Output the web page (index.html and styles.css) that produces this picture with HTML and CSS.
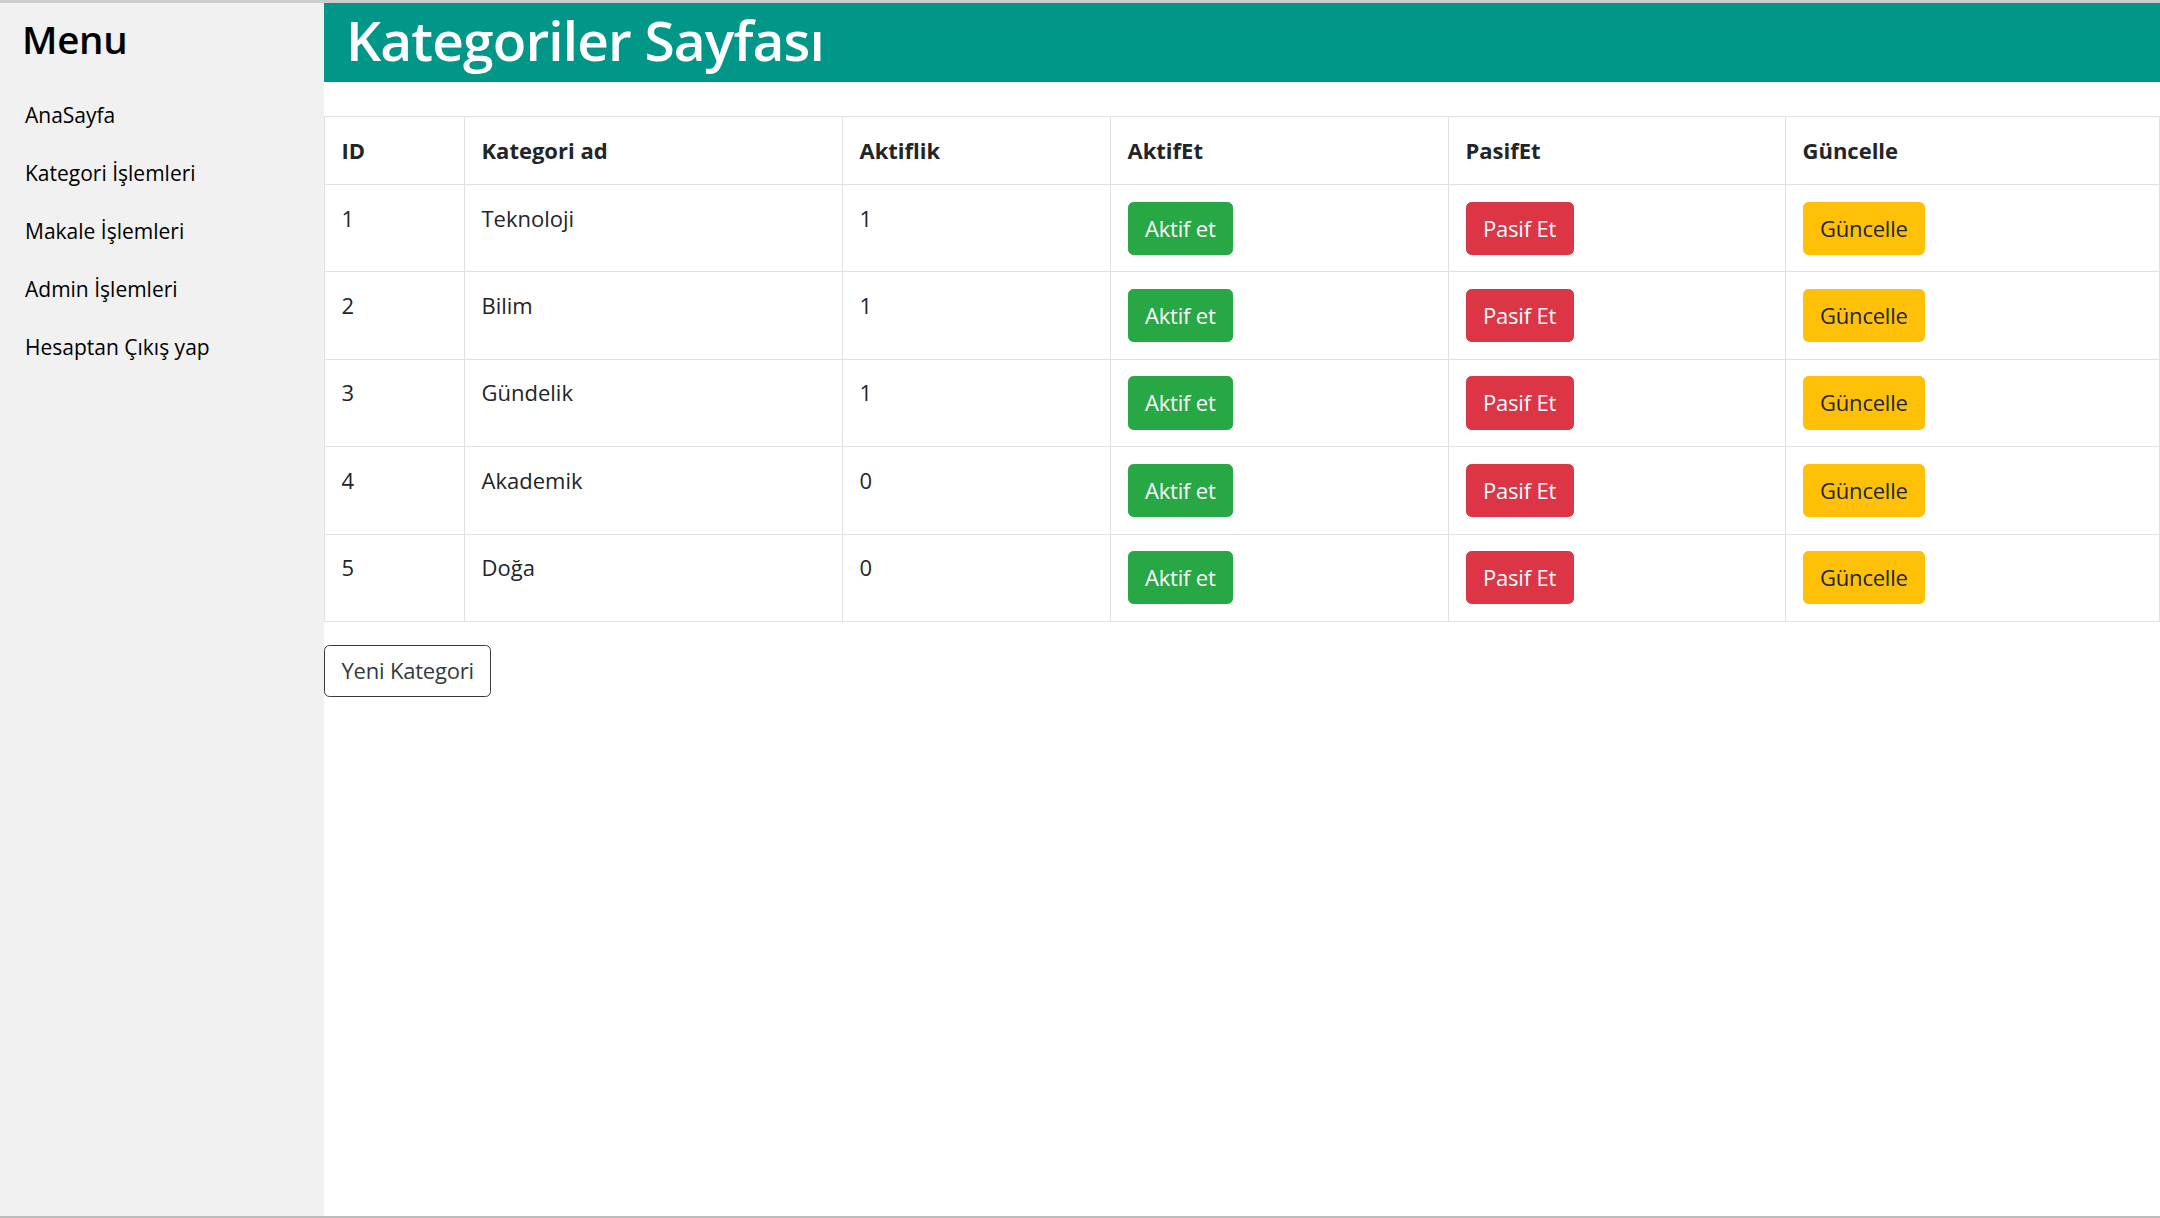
FILE: index.html
```html
<!DOCTYPE html>
<html lang="tr">
<head>
<meta charset="utf-8">
<title>Kategoriler Sayfası</title>
<link rel="stylesheet" href="styles.css">
</head>
<body>
<div class="frame">
  <aside class="sidebar">
    <h3 class="menu-title">Menu</h3>
    <nav class="menu">
      <a class="menu-item" href="#">AnaSayfa</a>
      <a class="menu-item" href="#">Kategori İşlemleri</a>
      <a class="menu-item" href="#">Makale İşlemleri</a>
      <a class="menu-item" href="#">Admin İşlemleri</a>
      <a class="menu-item" href="#">Hesaptan Çıkış yap</a>
    </nav>
  </aside>
  <main class="main">
    <header class="page-header">
      <h1 class="page-title">Kategoriler Sayfası</h1>
    </header>
    <table class="data-table">
      <colgroup>
        <col class="col-id">
        <col class="col-name">
        <col class="col-active">
        <col class="col-act">
        <col class="col-pas">
        <col class="col-upd">
      </colgroup>
      <thead>
        <tr><th>ID</th><th>Kategori ad</th><th>Aktiflik</th><th>AktifEt</th><th>PasifEt</th><th>Güncelle</th></tr>
      </thead>
      <tbody>
        <tr><td>1</td><td>Teknoloji</td><td>1</td><td><a class="btn btn-success" href="#">Aktif et</a></td><td><a class="btn btn-danger" href="#">Pasif Et</a></td><td><a class="btn btn-warning" href="#">Güncelle</a></td></tr>
        <tr><td>2</td><td>Bilim</td><td>1</td><td><a class="btn btn-success" href="#">Aktif et</a></td><td><a class="btn btn-danger" href="#">Pasif Et</a></td><td><a class="btn btn-warning" href="#">Güncelle</a></td></tr>
        <tr><td>3</td><td>Gündelik</td><td>1</td><td><a class="btn btn-success" href="#">Aktif et</a></td><td><a class="btn btn-danger" href="#">Pasif Et</a></td><td><a class="btn btn-warning" href="#">Güncelle</a></td></tr>
        <tr><td>4</td><td>Akademik</td><td>0</td><td><a class="btn btn-success" href="#">Aktif et</a></td><td><a class="btn btn-danger" href="#">Pasif Et</a></td><td><a class="btn btn-warning" href="#">Güncelle</a></td></tr>
        <tr><td>5</td><td>Doğa</td><td>0</td><td><a class="btn btn-success" href="#">Aktif et</a></td><td><a class="btn btn-danger" href="#">Pasif Et</a></td><td><a class="btn btn-warning" href="#">Güncelle</a></td></tr>
      </tbody>
    </table>
    <div class="actions">
      <a class="btn btn-outline-dark" href="#">Yeni Kategori</a>
    </div>
  </main>
</div>
</body>
</html>
```

FILE: styles.css
```css
* { box-sizing: border-box; }

html, body {
  margin: 0;
  padding: 0;
  background: #ffffff;
}

body {
  font-family: "Open Sans", "Noto Sans", "Liberation Sans", sans-serif;
  font-size: 22px;
  line-height: 33px;
  color: #212529;
  height: 1218px;
  overflow: hidden;
  border-top: 3px solid #cdcdcd;
  border-bottom: 2px solid #bcbcbc;
}

.frame {
  display: flex;
  height: 1213px;
}

.sidebar {
  width: 324px;
  flex: 0 0 324px;
  background: #f1f1f1;
  color: #000000;
}

.menu-title {
  margin: 13px 0 25px;
  padding: 0 22px;
  font-size: 38.5px;
  line-height: 46px;
  font-weight: 600;
  letter-spacing: -0.3px;
}

.menu {
  display: flex;
  flex-direction: column;
}

.menu-item {
  display: block;
  padding: 12.4px 22px 12.4px 25px;
  color: #000000;
  text-decoration: none;
  font-size: 21px;
  line-height: 33px;
}

.main {
  flex: 1 1 auto;
  min-width: 0;
}

.page-header {
  background: #009688;
  color: #ffffff;
  height: 79px;
  padding: 4px 22px 9px;
}

.page-title {
  margin: 0;
  font-size: 55px;
  line-height: 66px;
  font-weight: 600;
  letter-spacing: -0.85px;
}

.data-table {
  width: 100%;
  margin-top: 34px;
  border-collapse: collapse;
  table-layout: fixed;
}

.col-id { width: 140px; }
.col-name { width: 378px; }
.col-active { width: 268px; }
.col-act { width: 338px; }
.col-pas { width: 337px; }

.data-table th,
.data-table td {
  border: 1px solid #dee2e6;
  padding: 16.5px;
  text-align: left;
  vertical-align: top;
}

.data-table th {
  font-weight: 700;
  padding-top: 16.5px;
  padding-bottom: 17.5px;
}

.btn {
  display: inline-block;
  padding: 9.2px 16.5px;
  border: 1px solid transparent;
  border-radius: 5.5px;
  font-size: 22px;
  line-height: 33px;
  text-decoration: none;
  vertical-align: top;
  letter-spacing: -0.2px;
}

.btn-success { background: #28a745; border-color: #28a745; color: #ffffff; }
.btn-danger { background: #dc3545; border-color: #dc3545; color: #ffffff; }
.btn-warning { background: #ffc107; border-color: #ffc107; color: #212529; }
.btn-outline-dark { background: transparent; border-color: #343a40; color: #343a40; padding: 8.5px 16.5px; }

.actions {
  margin-top: 23px;
}
```
